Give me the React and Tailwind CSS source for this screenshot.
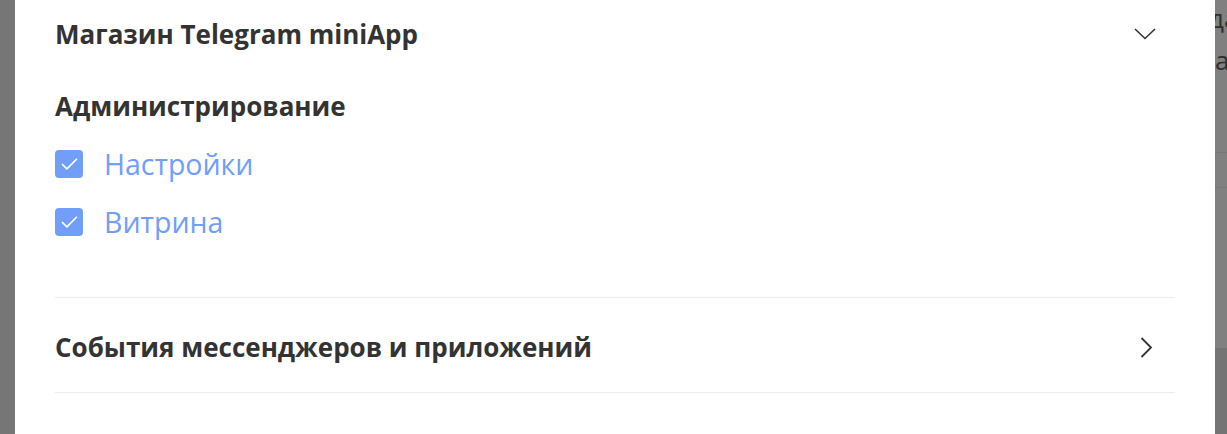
import { Check } from "lucide-react";

const font = { fontFamily: '"Open Sans", "Noto Sans", sans-serif' };

function CheckItem({ label }) {
  return (
    <label className="flex h-[58px] items-center gap-[21px]">
      <span className="flex h-[28px] w-[28px] items-center justify-center rounded-[4px] bg-[#709ef8]">
        <Check className="h-[21px] w-[21px] text-white" strokeWidth={2} />
      </span>
      <span className="text-[28.5px] leading-none text-[#709ef8]">{label}</span>
    </label>
  );
}

function ChevronDownThin() {
  return (
    <svg width="22" height="12" viewBox="0 0 22 12" className="mr-[19px]">
      <polyline points="1,1 11,10.5 21,1" fill="none" stroke="#333" strokeWidth="1.6" />
    </svg>
  );
}

function ChevronRightThin() {
  return (
    <svg width="13" height="21" viewBox="0 0 13 21" className="mr-[22px]">
      <polyline points="1.5,1 11,10.5 1.5,20" fill="none" stroke="#333" strokeWidth="1.8" />
    </svg>
  );
}

export default function App() {
  return (
    <div className="flex h-[434px] w-full overflow-hidden bg-[#808080]" style={font}>
      {/* overlay edge on the left */}
      <div className="w-[15px] shrink-0 bg-[#757675]" />

      {/* modal */}
      <div className="w-[1200px] shrink-0 bg-white px-10">
        <div className="flex h-[68px] items-center justify-between">
          <h2 className="text-[26px] font-bold text-[#333333]">Магазин Telegram miniApp</h2>
          <ChevronDownThin />
        </div>

        <div className="pt-[24px]">
          <h3 className="text-[26px] font-bold leading-[28px] text-[#333333]">Администрирование</h3>
          <div className="mt-[15px] flex flex-col">
            <CheckItem label="Настройки" />
            <CheckItem label="Витрина" />
          </div>
        </div>

        <div className="mt-[46px] border-t border-[#ececf0]">
          <div className="flex h-[95px] items-center justify-between border-b border-[#ececf0] pt-[4px]">
            <h2 className="text-[26px] font-bold text-[#333333]">События мессенджеров и приложений</h2>
            <ChevronRightThin />
          </div>
        </div>
      </div>

      {/* page behind the overlay, right side */}
      <div className="flex min-w-0 flex-1 flex-col overflow-hidden">
        <div className="flex h-[348px] flex-col bg-[#808080]">
          <div className="-ml-[6px] mt-[2px] whitespace-nowrap text-[26px] leading-[32px] text-[#2f2f2f]">да</div>
          <div className="mt-[10px] whitespace-nowrap text-[26px] leading-[32px] text-[#2f2f2f]">а</div>
          <div className="mt-[76px] h-px bg-[#767676]" />
          <div className="mt-[34px] h-px bg-[#767676]" />
        </div>
        <div className="flex-1 bg-[#737473]" />
      </div>
    </div>
  );
}
